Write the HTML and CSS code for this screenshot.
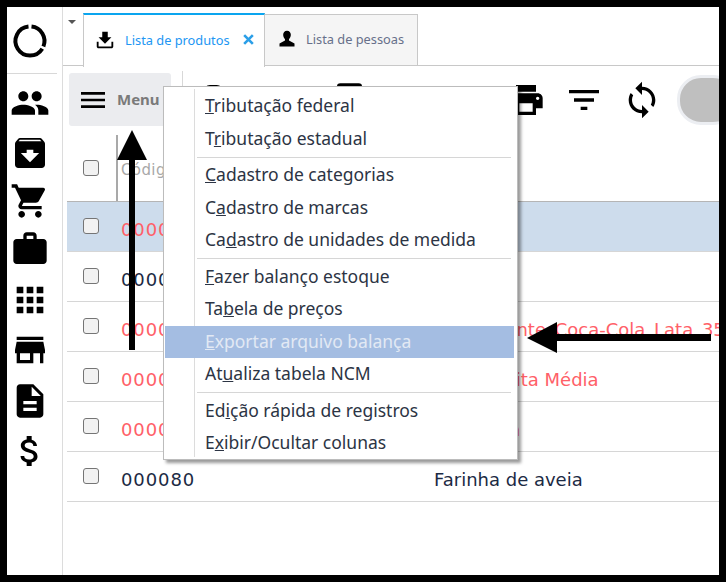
FILE: index.html
```html
<!DOCTYPE html>
<html>
<head>
    <title>Lista de produtos</title>
    <link rel="stylesheet" href="styles.css">
</head>
<body>
    <div class="app">
        <div class="sidebar">
            <div class="logo">
                <svg width="40" height="40" viewBox="0 0 40 40" fill="none" stroke="#000" stroke-width="4">
                    <path d="M21.5 5.6a14.5 14.5 0 0 1 11.9 19.8" />
                    <path d="M32.3 27.7a14.5 14.5 0 1 1-13.8-22.1" />
                </svg>
            </div>
            <div class="side-icons">
                <svg class="side-icon" viewBox="0 0 24 24"><path d="M16 11c1.66 0 2.99-1.34 2.99-3S17.66 5 16 5c-1.66 0-3 1.34-3 3s1.34 3 3 3zm-8 0c1.66 0 2.99-1.34 2.99-3S9.66 5 8 5C6.34 5 5 6.34 5 8s1.34 3 3 3zm0 2c-2.33 0-7 1.17-7 3.5V19h14v-2.5c0-2.33-4.67-3.5-7-3.5zm8 0c-.29 0-.62.02-.97.05 1.16.84 1.97 1.97 1.97 3.45V19h6v-2.5c0-2.33-4.67-3.5-7-3.5z"/></svg>
                <svg class="side-icon" viewBox="0 0 24 24"><path d="M20.54 5.23l-1.39-1.68C18.88 3.21 18.47 3 18 3H6c-.47 0-.88.21-1.16.55L3.46 5.23C3.17 5.57 3 6.02 3 6.5V19c0 1.1.9 2 2 2h14c1.1 0 2-.9 2-2V6.5c0-.48-.17-.93-.46-1.27zM12 17.5L6.5 12H10v-2h4v2h3.5L12 17.5zM5.12 5l.81-1h12l.94 1H5.12z"/></svg>
                <svg class="side-icon up" viewBox="0 0 24 24"><path d="M7 18c-1.1 0-1.99.9-1.99 2S5.9 22 7 22s2-.9 2-2-.9-2-2-2zM1 2v2h2l3.6 7.59-1.35 2.45c-.16.28-.25.61-.25.96 0 1.1.9 2 2 2h12v-2H7.42c-.14 0-.25-.11-.25-.25l.03-.12.9-1.63h7.45c.75 0 1.41-.41 1.75-1.03l3.58-6.49c.08-.14.12-.31.12-.48 0-.55-.45-1-1-1H5.21l-.94-2H1zm16 16c-1.1 0-1.99.9-1.99 2s.89 2 1.99 2 2-.9 2-2-.9-2-2-2z"/></svg>
                <svg class="side-icon up" viewBox="0 0 24 24"><path d="M20 6h-4V4c0-1.11-.89-2-2-2h-4c-1.11 0-2 .89-2 2v2H4c-1.11 0-1.99.89-1.99 2L2 19c0 1.11.89 2 2 2h16c1.11 0 2-.89 2-2V8c0-1.11-.89-2-2-2zm-6 0h-4V4h4v2z"/></svg>
                <svg class="side-icon down" viewBox="0 0 24 24"><path d="M4 8h4V4H4v4zm6 12h4v-4h-4v4zm-6 0h4v-4H4v4zm0-6h4v-4H4v4zm6 0h4v-4h-4v4zm6-10v4h4V4h-4zm-6 4h4V4h-4v4zm6 6h4v-4h-4v4zm0 6h4v-4h-4v4z"/></svg>
                <svg class="side-icon" viewBox="0 0 24 24"><path d="M20 4H4v2h16V4zm1 10v-2l-1-5H4l-1 5v2h1v6h10v-6h4v6h2v-6h1zm-9 4H6v-4h6v4z"/></svg>
                <svg class="side-icon down" viewBox="0 0 24 24"><path d="M14 2H6c-1.1 0-1.99.9-1.99 2L4 20c0 1.1.89 2 1.99 2H18c1.1 0 2-.9 2-2V8l-6-6zm2 16H8v-2h8v2zm0-4H8v-2h8v2zm-3-5V3.5L18.5 9H13z"/></svg>
                <svg class="side-icon" viewBox="0 0 24 24"><path d="M11.8 10.9c-2.27-.59-3-1.2-3-2.15 0-1.09 1.01-1.85 2.7-1.85 1.78 0 2.44.85 2.5 2.1h2.21c-.07-1.72-1.12-3.3-3.21-3.81V3h-3v2.16c-1.94.42-3.5 1.68-3.5 3.61 0 2.31 1.91 3.46 4.7 4.13 2.5.6 3 1.48 3 2.41 0 .69-.49 1.79-2.7 1.79-2.06 0-2.87-.92-2.98-2.1h-2.2c.12 2.19 1.76 3.42 3.68 3.83V21h3v-2.15c1.95-.37 3.5-1.5 3.5-3.55 0-2.84-2.43-3.81-4.7-4.4z"/></svg>
            </div>
        </div>
        <div class="main">
            <div class="tabbar">
                <div class="tab-caret"></div>
                <div class="tab tab-active">
                    <svg class="tab-icon" viewBox="0 0 24 24"><path d="M19 9h-4V3H9v6H5l7 7 7-7z"/><path d="M3 14h2v5h14v-5h2v5c0 1.1-.9 2-2 2H5c-1.1 0-2-.9-2-2z"/></svg>
                    <span class="tab-label">Lista de produtos</span>
                    <svg class="tab-close" viewBox="0 0 12 12"><path d="M2 2l8 8M10 2l-8 8"/></svg>
                </div>
                <div class="tab tab-people">
                    <svg class="tab-icon" viewBox="0 0 24 24"><path d="M12 2c-3 0-4.6 2.3-4.6 5 0 2.2 1 4 2.2 5.2v1.6L3 17.5V21h18v-3.5l-6.6-3.7v-1.6c1.2-1.2 2.2-3 2.2-5.2 0-2.7-1.6-5-4.6-5z"/></svg>
                    <span class="tab-label">Lista de pessoas</span>
                </div>
            </div>
            <div class="toolbar">
                <button class="menu-btn">
                    <svg width="32" height="32" viewBox="0 0 24 24"><path d="M3 18h18v-2H3v2zm0-5h18v-2H3v2zm0-7v2h18V6H3z"/></svg>
                    <span class="menu-label">Menu</span>
                </button>
                <div class="tool-sep"></div>
                <div class="tools">
                    <svg class="tool tool-first" viewBox="0 0 24 24"><rect x="8" y="3" width="12" height="18" rx="4"/></svg>
                    <svg class="tool" viewBox="0 0 24 24"><rect x="3" y="2" width="15" height="18" rx="2"/></svg>
                    <svg class="tool" viewBox="0 0 24 24"><rect x="17" y="8" width="3" height="12"/></svg>
                    <svg class="tool" viewBox="0 0 24 24"><rect x="9" y="6" width="7" height="12" rx="3"/></svg>
                    <svg class="tool" viewBox="0 0 24 24"><path d="M19 8H5c-1.66 0-3 1.34-3 3v6h4v4h12v-4h4v-6c0-1.66-1.34-3-3-3zm-3 11H8v-5h8v5zm3-7c-.55 0-1-.45-1-1s.45-1 1-1 1 .45 1 1-.45 1-1 1zm-1-9H6v4h12V3z"/></svg>
                    <svg class="tool" viewBox="0 0 24 24"><path d="M10 18h4v-2h-4v2zM3 6v2h18V6H3zm3 7h12v-2H6v2z"/></svg>
                    <svg class="tool" viewBox="0 0 24 24"><path d="M12 4V1L8 5l4 4V6c3.31 0 6 2.69 6 6 0 1.01-.25 1.97-.7 2.8l1.46 1.46C19.54 15.03 20 13.57 20 12c0-4.42-3.58-8-8-8zm0 14c-3.31 0-6-2.69-6-6 0-1.01.25-1.97.7-2.8L5.24 7.74C4.46 8.97 4 10.43 4 12c0 4.42 3.58 8 8 8v3l4-4-4-4v3z"/></svg>
                </div>
                <div class="search-pill"></div>
            </div>
            <div class="table">
                <div class="row row-head">
                    <span class="check"></span>
                    <span class="cell-code head-code">Código</span>
                </div>
                <div class="row row-sel red"><span class="check"></span><span class="cell-code">000001</span></div>
                <div class="row"><span class="check"></span><span class="cell-code">000002</span></div>
                <div class="row red"><span class="check"></span><span class="cell-code">000003</span><span class="cell-desc cell-wide">Refrigerante Coca-Cola Lata 350ml</span></div>
                <div class="row red"><span class="check"></span><span class="cell-code">000004</span><span class="cell-desc">Batata Frita Média</span></div>
                <div class="row red"><span class="check"></span><span class="cell-code">000005</span><span class="cell-desc">Mandioca</span></div>
                <div class="row"><span class="check"></span><span class="cell-code">000080</span><span class="cell-desc">Farinha de aveia</span></div>
            </div>
        </div>

        <div class="popup">
            <div class="popup-item"><u>T</u>ributação federal</div>
            <div class="popup-item">T<u>r</u>ibutação estadual</div>
            <div class="popup-sep"></div>
            <div class="popup-item"><u>C</u>adastro de categorias</div>
            <div class="popup-item">C<u>a</u>dastro de marcas</div>
            <div class="popup-item">Ca<u>d</u>astro de unidades de medida</div>
            <div class="popup-sep"></div>
            <div class="popup-item"><u>F</u>azer balanço estoque</div>
            <div class="popup-item">Ta<u>b</u>ela de preços</div>
            <div class="popup-item popup-active"><u>E</u>xportar arquivo balança</div>
            <div class="popup-item">At<u>u</u>aliza tabela NCM</div>
            <div class="popup-sep"></div>
            <div class="popup-item">Ed<u>i</u>ção rápida de registros</div>
            <div class="popup-item">E<u>x</u>ibir/Ocultar colunas</div>
        </div>

        <svg class="arrows" width="726" height="582" viewBox="0 0 726 582">
            <path d="M132 130l15 30h-12v190h-6V160h-12z"/>
            <path d="M527 338l30-16v12h154v7H557v12z"/>
        </svg>
    </div>
</body>
</html>
```

FILE: styles.css
```css
* {
    box-sizing: border-box;
}

body {
    margin: 0;
    font-family: "DejaVu Sans", sans-serif;
    background-color: #fff;
}

.app {
    width: 726px;
    height: 582px;
    border: 7px solid #000;
    display: flex;
    overflow: hidden;
    background-color: #fff;
}

/* left bar */
.sidebar {
    width: 56px;
    flex-shrink: 0;
    border-right: 1px solid #dcdcdc;
}

.logo {
    height: 67px;
    margin-right: 5px;
    padding: 14px 0 0 3px;
    border-bottom: 1px solid #d8d8d8;
}

.side-icons {
    display: flex;
    flex-direction: column;
    gap: 10px;
    padding: 9px 0 0 3px;
}

.side-icon {
    width: 40px;
    height: 40px;
}

.up {
    margin-top: -2px;
}

.down {
    margin-top: 1px;
}

/* tabs */
.main {
    flex: 1;
    min-width: 0;
}

.tabbar {
    height: 59px;
    display: flex;
    border-bottom: 1px solid #c8c8c8;
}

.tab-caret {
    width: 20px;
    flex-shrink: 0;
}

.tab-caret::after {
    content: "";
    display: block;
    width: 0;
    margin: 13px 0 0 5px;
    border-left: 4px solid transparent;
    border-right: 4px solid transparent;
    border-top: 4px solid #555;
}

.tab {
    width: 153px;
    height: 52px;
    margin-top: 7px;
    display: flex;
    align-items: center;
    padding: 0 0 3px 12px;
    background-color: #f5f5f5;
    border: 1px solid #c8c8c8;
    border-left: none;
    color: #67708a;
    font-family: "Noto Sans", sans-serif;
    font-size: 12.8px;
}

.tab-active {
    width: 182px;
    height: 54px;
    margin-top: 5px;
    padding-left: 10px;
    background-color: #fff;
    border: none;
    border-left: 1px solid #c8c8c8;
    border-top: 2px solid #0aa5ef;
    border-right: 1px solid #c8c8c8;
    color: #2196f3;
    position: relative;
    top: 1px;
}

.tab-icon {
    width: 22px;
    height: 22px;
    margin-right: 9px;
    flex-shrink: 0;
}

.tab-people .tab-icon {
    width: 20px;
    height: 20px;
}

.tab-close {
    width: 13px;
    height: 13px;
    margin-left: 12px;
    fill: none;
    stroke: #2b9fe8;
    stroke-width: 2.4;
}

/* toolbar */
.toolbar {
    height: 69px;
    display: flex;
    align-items: flex-start;
    padding: 7px 0 0 6px;
}

.menu-btn {
    width: 102px;
    height: 53px;
    flex-shrink: 0;
    display: flex;
    align-items: center;
    gap: 8px;
    padding: 0 0 0 8px;
    background-color: #ebecef;
    border: none;
    border-radius: 3px;
    color: #7a7a7a;
    font-family: "Noto Sans", sans-serif;
    font-size: 15px;
    font-weight: 700;
}

.menu-label {
    margin-bottom: 2px;
}

.tool-sep {
    width: 1px;
    height: 60px;
    margin: -2px 7px 0 11px;
    flex-shrink: 0;
    background-color: #d8d8d8;
}

.tools {
    display: flex;
    gap: 18px;
    height: 50px;
    padding-top: 7px;
}

.tool {
    width: 40px;
    height: 40px;
    flex-shrink: 0;
}

.tool-first {
    margin-right: 84px;
}

.search-pill {
    width: 60px;
    height: 50px;
    margin: 2px 0 0 15px;
    flex-shrink: 0;
    background-color: #bfbfbf;
    border: 3px solid #eceef2;
    border-radius: 24px;
}

/* table */
.table {
    margin-left: 4px;
}

.row {
    height: 50px;
    display: flex;
    align-items: center;
    border-bottom: 1px solid #d6d6d6;
    color: #1c2a44;
    font-size: 18px;
    white-space: nowrap;
}

.row-head {
    height: 67px;
    border-bottom: 1px solid #b5b5b5;
}

.row-sel {
    background-color: #cddcec;
}

.red {
    color: #ff6068;
}

.check {
    width: 16px;
    height: 16px;
    margin: 0 22px 1px 16px;
    flex-shrink: 0;
    background-color: #f2f2f2;
    border: 1px solid #757575;
    border-radius: 3px;
}

.cell-code {
    width: 313px;
    margin-top: 6px;
    flex-shrink: 0;
    letter-spacing: 0.9px;
}

.cell-desc {
    margin-top: 6px;
}

.cell-wide {
    word-spacing: 3px;
}

.head-code {
    align-self: stretch;
    display: flex;
    align-items: center;
    margin: 0 0 0 -5px;
    padding: 4px 0 0 3px;
    border-left: 2px solid #a9a9a9;
    color: #a8a8a8;
    font-size: 15px;
    letter-spacing: 0.4px;
}

/* context menu */
.popup {
    position: absolute;
    left: 163px;
    top: 86px;
    width: 355px;
    height: 374px;
    padding: 3px 3px 3px 1px;
    background-color: #fff;
    border: 1px solid #bcbcbc;
    box-shadow: 3px 3px 3px rgba(0, 0, 0, 0.4);
    font-family: "Noto Sans", sans-serif;
    font-size: 17.5px;
    color: #2c3444;
}

.popup::before {
    content: "";
    position: absolute;
    left: 30px;
    top: 2px;
    bottom: 2px;
    width: 1px;
    background-color: #dcdcdc;
}

.popup-item {
    height: 32.5px;
    line-height: 31px;
    padding-left: 40px;
    position: relative;
}

.popup-active {
    background-color: #a4bde2;
    color: #e2e9f4;
}

.popup-sep {
    height: 1px;
    margin: 1.5px 3px 1.5px 32px;
    background-color: #d6d6d6;
    position: relative;
}

.arrows {
    position: absolute;
    left: 0;
    top: 0;
}
```
